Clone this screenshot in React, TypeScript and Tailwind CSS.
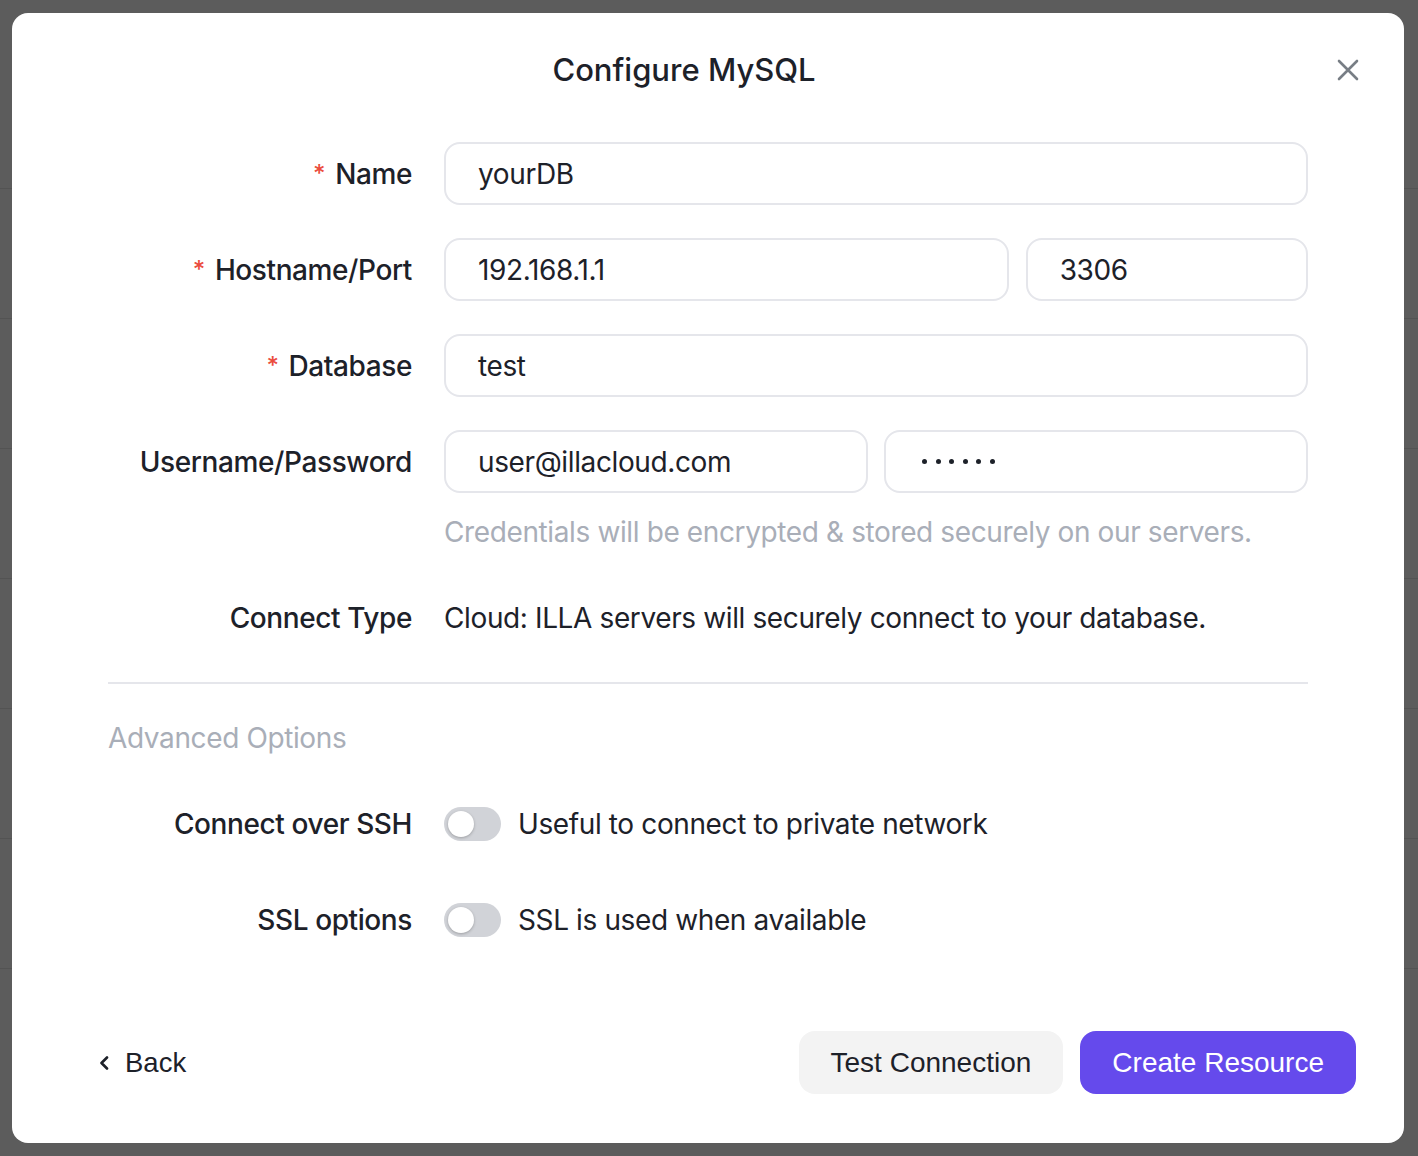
import React from "react";

const inter = { fontFamily: "Inter, 'Noto Sans', sans-serif" };

function Label({ text, required }: { text: string; required?: boolean }) {
  return (
    <div className="flex items-center justify-end text-[28px] font-medium leading-[40px] tracking-[-0.4px] text-[#1d2129]">
      {required && <span className="mr-[10px] text-[24px] text-[#eb4d3d]">*</span>}
      <span>{text}</span>
    </div>
  );
}

function Input({ value, className = "" }: { value: React.ReactNode; className?: string }) {
  return (
    <div
      className={
        "flex h-[63px] min-w-0 items-center rounded-[16px] border-2 border-[#e5e6eb] bg-white pl-[32px] text-[28px] tracking-[-0.38px] text-[#1d2129] " +
        className
      }
    >
      {value}
    </div>
  );
}

function Toggle() {
  return (
    <div className="relative h-[34px] w-[57px] shrink-0 rounded-full bg-[#d1d3d8]">
      <div className="absolute left-[4px] top-[4px] h-[26px] w-[26px] rounded-full bg-white shadow-[0_1px_3px_rgba(0,0,0,0.25)]" />
    </div>
  );
}

function Dots() {
  return (
    <span className="flex items-center gap-[8.5px] pl-[4px]" aria-label="password">
      {Array.from({ length: 6 }).map((_, i) => (
        <span key={i} className="h-[5px] w-[5px] rounded-full bg-[#1d2129]" />
      ))}
    </span>
  );
}

export default function App() {
  return (
    <div className="relative h-[1156px] w-full overflow-hidden bg-white" style={inter}>
      {/* background page */}
      <div className="flex flex-col">
        <div className="h-[189px] border-b border-[#e6e6e6]" />
        {Array.from({ length: 6 }).map((_, i) => (
          <div key={i} className="h-[130px] border-b border-[#e6e6e6]" />
        ))}
        <div className="flex h-[130px] items-center text-[28px] text-[#333]">
          <span className="ml-[214px]">Mysql</span>
          <span className="ml-[190px]">illa</span>
          <span className="ml-[500px]">08:07 Jul 20</span>
        </div>
      </div>
      <div className="absolute inset-0 bg-black/[0.64]" />

      {/* modal */}
      <div className="absolute left-[12px] top-[13px] flex h-[1130px] w-[1392px] flex-col rounded-[16px] bg-white">
        {/* header */}
        <div className="flex items-center pl-[48px] pt-[39px]">
          <div className="flex-1 text-center text-[31px] font-medium leading-[36px] text-[#1d2129]">
            Configure MySQL
          </div>
          <button className="ml-[29px] mr-[45px] flex h-[22px] w-[22px] items-center justify-center text-[#787e85]">
            <svg width="22" height="22" viewBox="0 0 22 22" fill="none" stroke="currentColor" strokeWidth="2.6" strokeLinecap="round">
              <path d="M2 2 L20 20 M20 2 L2 20" />
            </svg>
          </button>
        </div>

        {/* form */}
        <div className="mt-[54px] flex flex-col px-[96px]">
          <div className="grid grid-cols-[304px_1fr] items-center gap-x-[32px]">
            <Label text="Name" required />
            <Input value="yourDB" />
          </div>
          <div className="mt-[33px] grid grid-cols-[304px_1fr] items-center gap-x-[32px]">
            <Label text="Hostname/Port" required />
            <div className="grid grid-cols-[2fr_1fr] gap-[17px]">
              <Input value="192.168.1.1" />
              <Input value="3306" />
            </div>
          </div>
          <div className="mt-[33px] grid grid-cols-[304px_1fr] items-center gap-x-[32px]">
            <Label text="Database" required />
            <Input value="test" />
          </div>
          <div className="mt-[33px] grid grid-cols-[304px_1fr] items-center gap-x-[32px]">
            <Label text="Username/Password" />
            <div className="grid grid-cols-2 gap-[16px]">
              <Input value="user@illacloud.com" />
              <Input value={<Dots />} />
            </div>
          </div>
          <div className="mt-[19px] grid grid-cols-[304px_1fr] gap-x-[32px]">
            <div />
            <div className="text-[28px] leading-[40px] tracking-[-0.38px] text-[#a9aeb8]">
              Credentials will be encrypted &amp; stored securely on our servers.
            </div>
          </div>
          <div className="mt-[46px] grid grid-cols-[304px_1fr] items-center gap-x-[32px]">
            <Label text="Connect Type" />
            <div className="text-[28px] leading-[40px] tracking-[-0.38px] text-[#1d2129]">
              Cloud: ILLA servers will securely connect to your database.
            </div>
          </div>
          <div className="mt-[44px] h-[2px] bg-[#e5e6eb]" />
          <div className="mt-[34px] text-[28px] leading-[40px] tracking-[-0.38px] text-[#a9aeb8]">Advanced Options</div>
          <div className="mt-[46px] grid grid-cols-[304px_1fr] items-center gap-x-[32px]">
            <Label text="Connect over SSH" />
            <div className="flex items-center gap-[17px]">
              <Toggle />
              <span className="text-[28px] leading-[40px] tracking-[-0.38px] text-[#1d2129]">Useful to connect to private network</span>
            </div>
          </div>
          <div className="mt-[56px] grid grid-cols-[304px_1fr] items-center gap-x-[32px]">
            <Label text="SSL options" />
            <div className="flex items-center gap-[17px]">
              <Toggle />
              <span className="text-[28px] leading-[40px] tracking-[-0.38px] text-[#1d2129]">SSL is used when available</span>
            </div>
          </div>
        </div>

        {/* footer */}
        <div
          className="mt-[91px] flex items-center pl-[87px] pr-[48px]"
          style={{ fontFamily: "'Liberation Sans', Arial, sans-serif" }}
        >
          <button className="flex items-center gap-[16px] text-[27.5px] text-[#1d2129]">
            <svg width="10" height="14" viewBox="0 0 10 14" fill="none" stroke="currentColor" strokeWidth="2.6" strokeLinecap="round" strokeLinejoin="round">
              <path d="M8 1.5 L2.5 7 L8 12.5" />
            </svg>
            Back
          </button>
          <div className="ml-auto flex gap-[17px]">
            <button className="h-[63px] rounded-[16px] bg-[#f3f3f3] px-[32px] text-[28px] text-[#1d2129]">
              Test Connection
            </button>
            <button className="h-[63px] rounded-[16px] bg-[#654aec] px-[32px] text-[28px] text-white">
              Create Resource
            </button>
          </div>
        </div>
      </div>
    </div>
  );
}
